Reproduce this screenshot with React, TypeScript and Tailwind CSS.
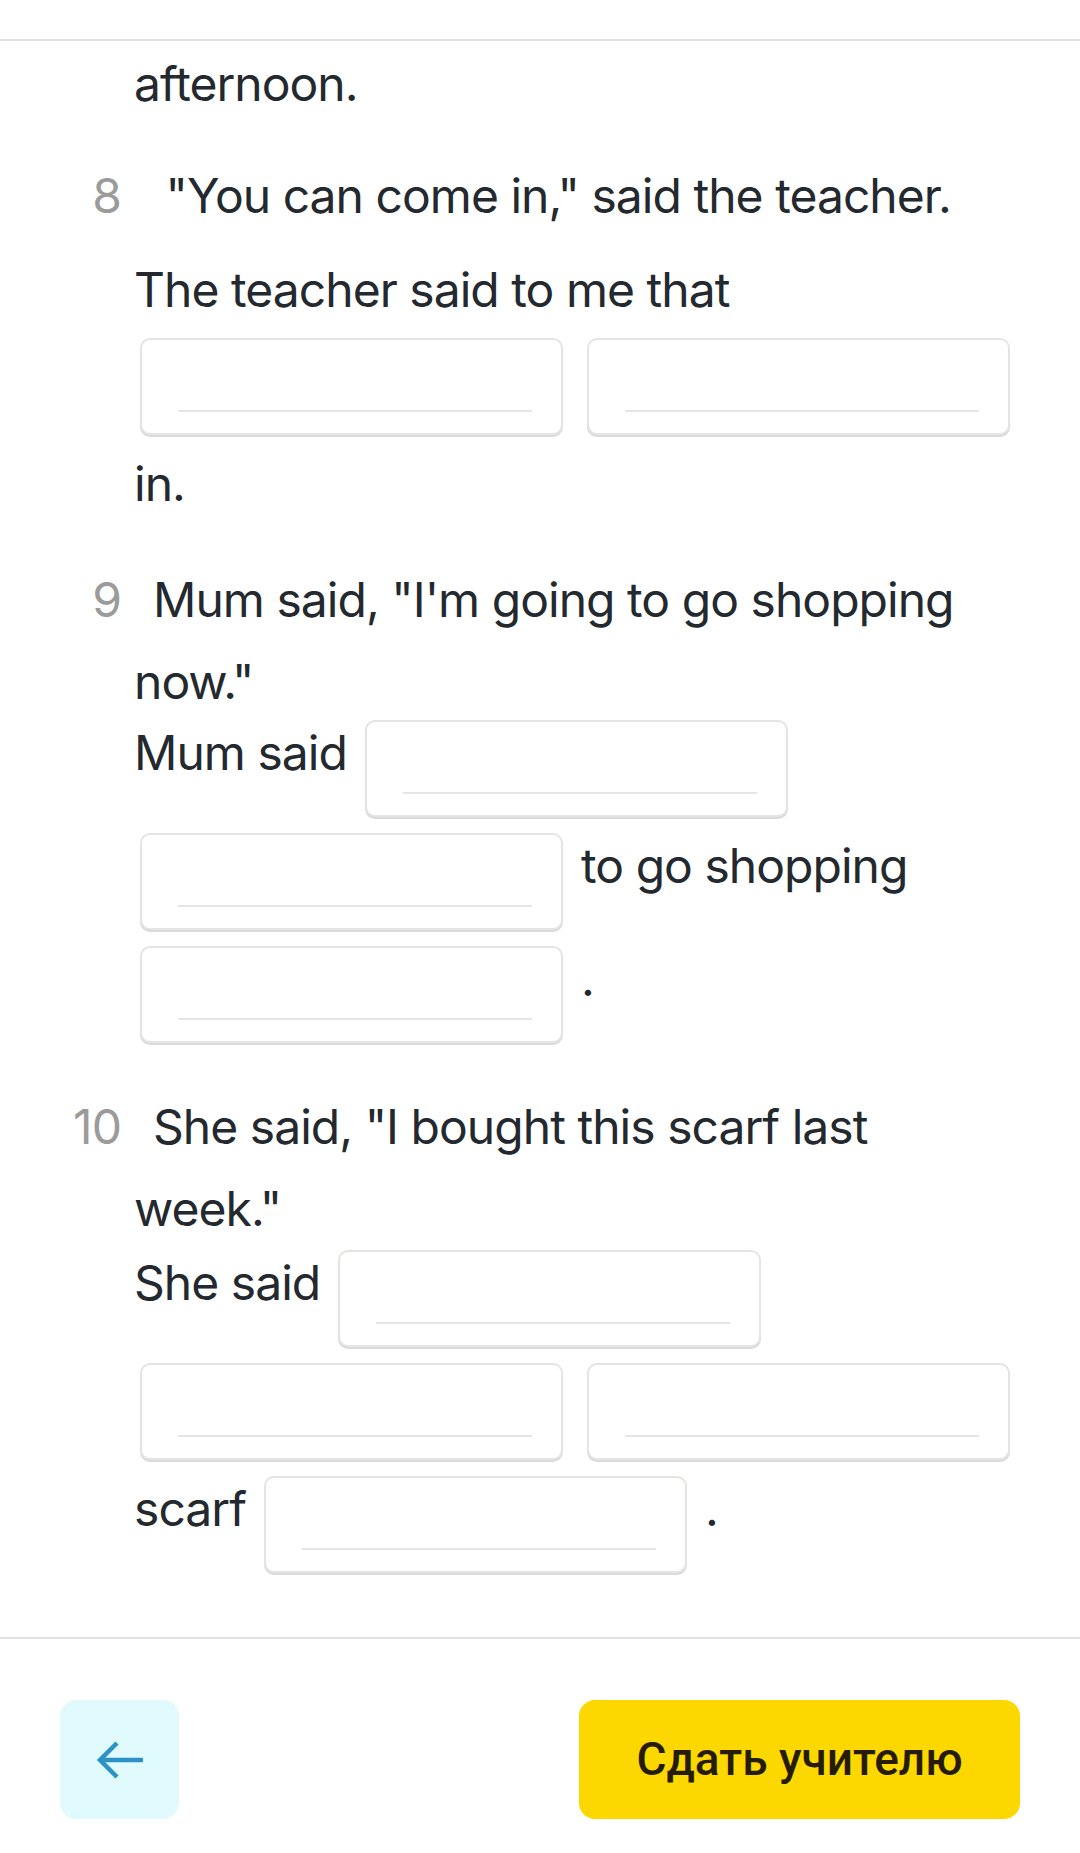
import React from 'react';

type Piece = { kind: 'text'; value: string } | { kind: 'blank' };

const t = (value: string): Piece => ({ kind: 'text', value });
const blank: Piece = { kind: 'blank' };

interface Question {
  num: number;
  prompt: string;
  answer: Piece[];
  answerGap: string;
}

const questions: Question[] = [
  {
    num: 8,
    prompt: '\u00a0"You can come in," said the teacher.',
    answer: [t('The teacher said to me that'), blank, blank, t('in.')],
    answerGap: 'mt-[20px]',
  },
  {
    num: 9,
    prompt: 'Mum said, "I\'m going to go shopping now."',
    answer: [t('Mum said'), blank, blank, t('to go shopping'), blank, t('.')],
    answerGap: '-mt-[3px]',
  },
  {
    num: 10,
    prompt: 'She said, "I bought this scarf last week."',
    answer: [t('She said'), blank, blank, blank, t('scarf'), blank, t('.')],
    answerGap: 'mt-0',
  },
];

function Blank() {
  return (
    <div className="mx-[6px] flex h-[97px] w-[423px] flex-col justify-end rounded-[10px] border-2 border-[#e4e5e0] bg-white pb-[21px] pl-[36px] pr-[29px] shadow-[0_2px_0_#dadada]">
      <div className="h-[2px] w-full bg-[#e5e5e5]" />
    </div>
  );
}

function AnswerRow({ pieces, className }: { pieces: Piece[]; className?: string }) {
  return (
    <div className={`flex flex-wrap items-start gap-x-3 gap-y-4 ${className ?? ''}`}>
      {pieces.map((p, i) =>
        p.kind === 'blank' ? (
          <Blank key={i} />
        ) : (
          <span key={i} className="leading-[65px]">
            {p.value}
          </span>
        )
      )}
    </div>
  );
}

export default function App() {
  return (
    <div
      className="flex h-screen w-full flex-col bg-white text-[48px] tracking-[-0.02em] text-[#23292e]"
      style={{ fontFamily: 'Inter, "Noto Sans", sans-serif' }}
    >
      {/* header area (cut off) */}
      <div className="h-[41px] shrink-0 border-b-2 border-[#e1e1e1]" />

      {/* exercise content */}
      <div className="flex-1 overflow-hidden pl-[134px] pr-[56px] pt-[10px]">
        <div className="leading-[65px]">afternoon.</div>

        {questions.map((q, idx) => (
          <div key={q.num} className={idx === 0 ? 'mt-[39px]' : 'mt-[43px]'}>
            <p className="leading-[82px]">
              <span className="-ml-[61px] mr-[32px] inline-block w-[48px] text-right text-[#9b9b9b]">
                {q.num}
              </span>
              {q.prompt}
            </p>
            <AnswerRow pieces={q.answer} className={q.answerGap} />
          </div>
        ))}
      </div>

      {/* footer */}
      <div className="flex shrink-0 items-center justify-between border-t-2 border-[#e1e1e1] px-[60px] pb-[34px] pt-[61px]">
        <button className="flex h-[119px] w-[119px] items-center justify-center rounded-[16px] bg-[#e1fafd]">
          <svg width="50" height="38" viewBox="0 0 50 38" fill="none">
            <path
              d="M48 19H5M22 2L5 19L22 36"
              stroke="#2b93c6"
              strokeWidth="4.5"
              strokeLinecap="butt"
              strokeLinejoin="miter"
            />
          </svg>
        </button>
        <button
          className="flex h-[119px] w-[441px] items-center justify-center rounded-[16px] bg-[#fcd700] text-[46px] font-medium tracking-normal text-[#261c02]"
          style={{ fontFamily: 'Roboto, "Noto Sans", sans-serif' }}
        >
          Сдать учителю
        </button>
      </div>
    </div>
  );
}
